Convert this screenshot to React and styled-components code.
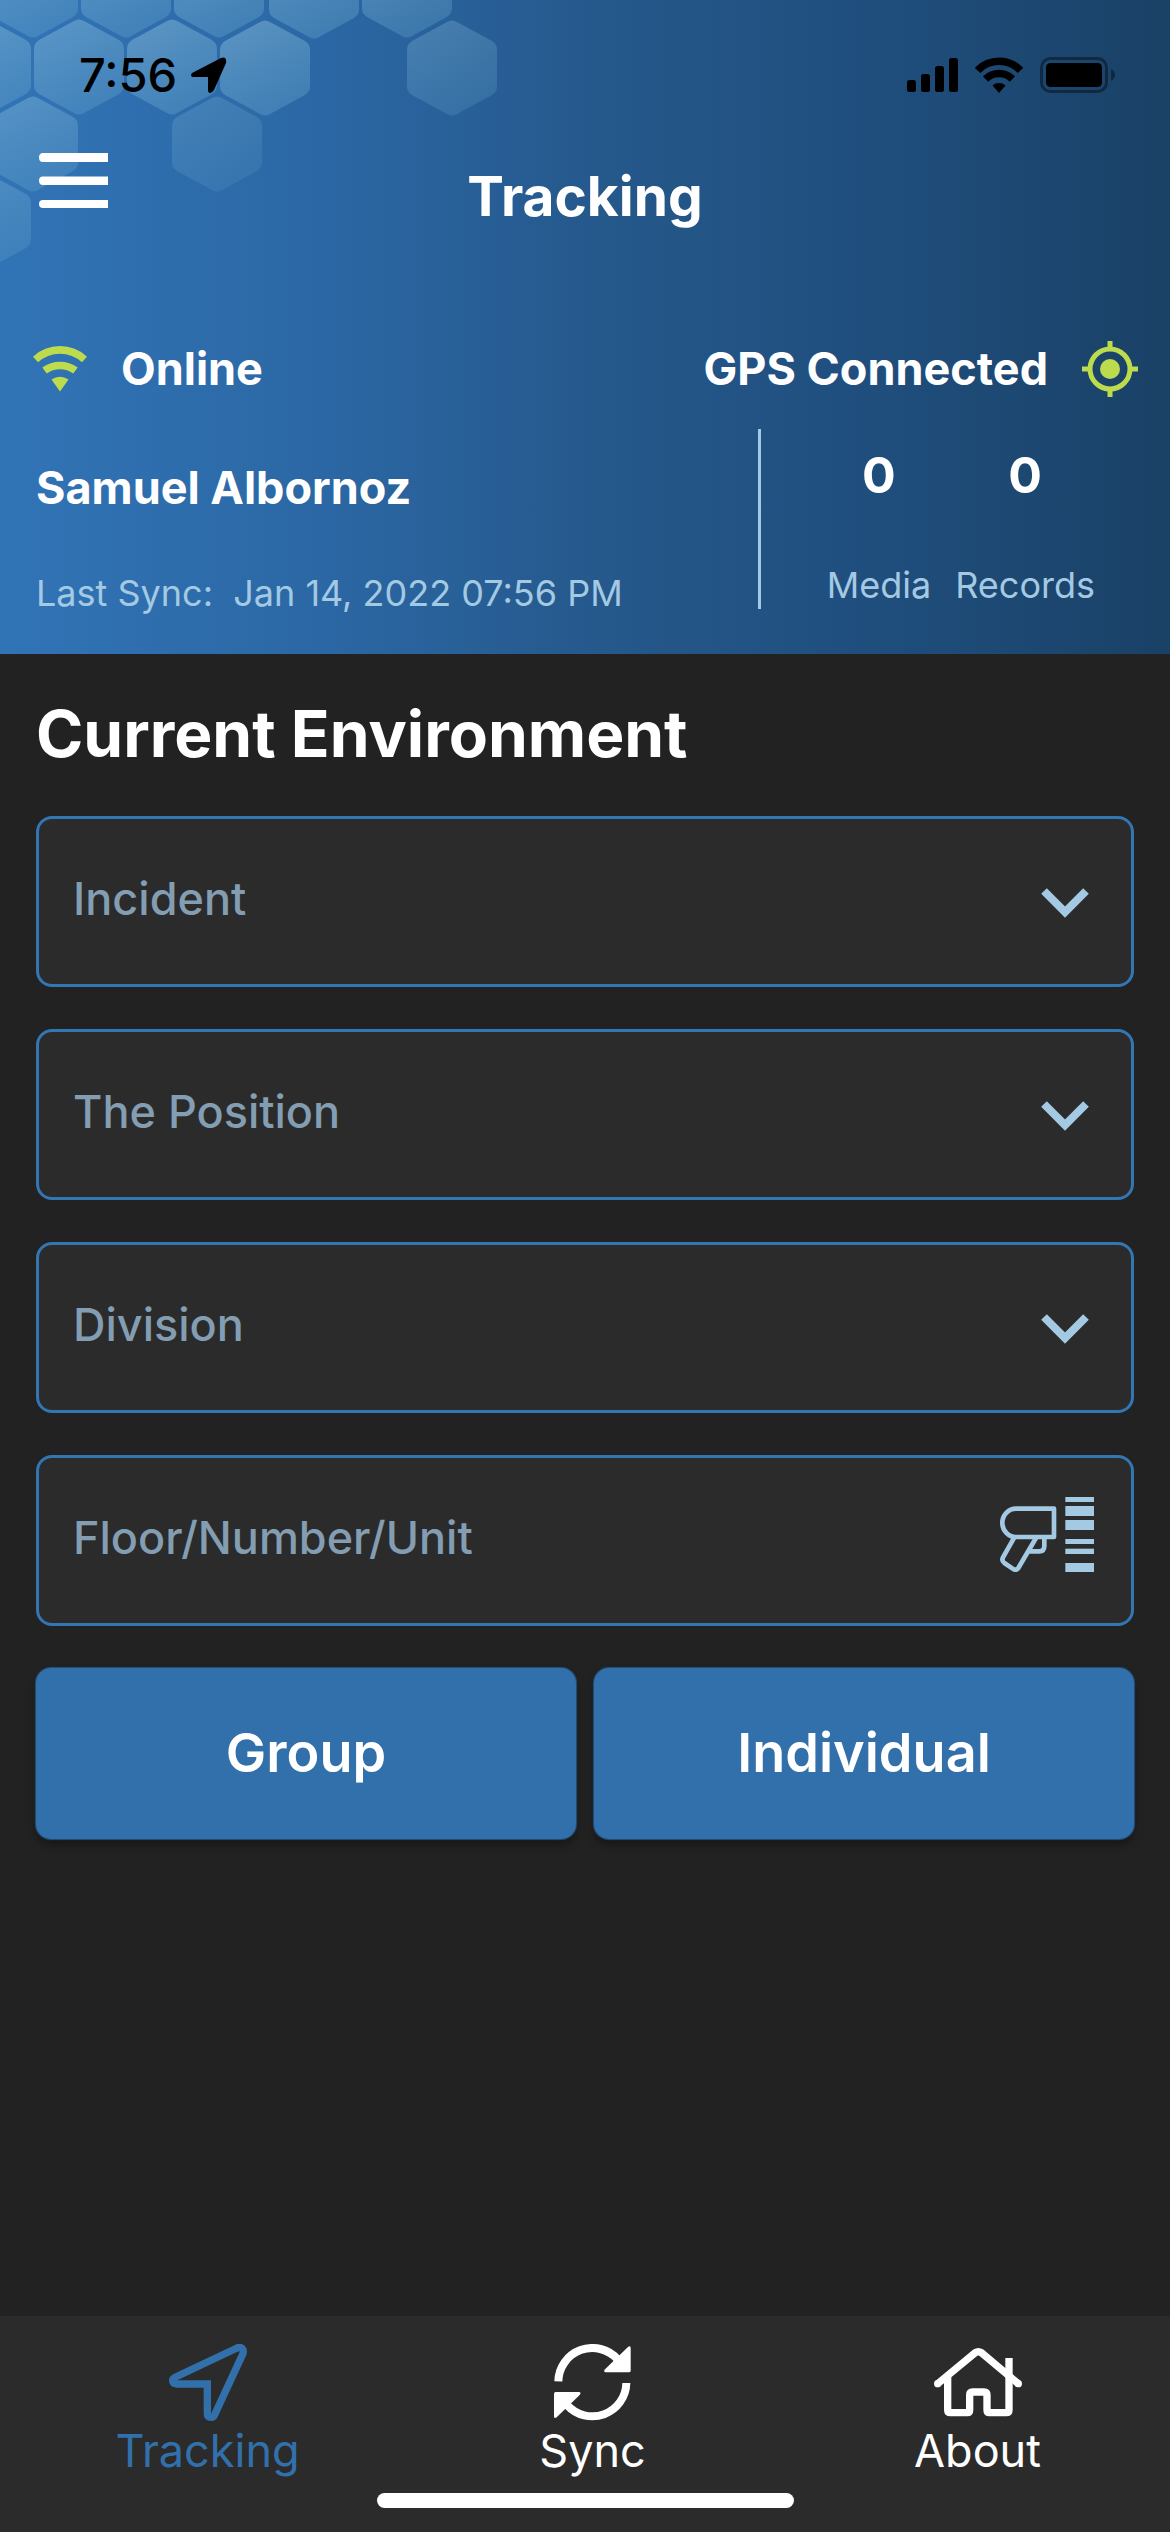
import React from "react";
import styled, { createGlobalStyle } from "styled-components";

const color = {
  page: "#222222",
  panel: "#2b2b2b",
  blue: "#3170aa",
  border: "#3276b3",
  sky: "#a4c9e2",
  muted: "#839db2",
  lime: "#bcdc4d",
  white: "#ffffff",
};

const GlobalStyle = createGlobalStyle`
  *, *::before, *::after { box-sizing: border-box; }
  body {
    margin: 0;
    background: ${color.page};
    color: ${color.white};
    font-family: Inter, "Liberation Sans", sans-serif;
  }
  button, select, input { font: inherit; color: inherit; }
  svg { display: block; flex: none; }
`;

const Screen = styled.div`
  min-height: 100vh;
  display: flex;
  flex-direction: column;
`;

const Header = styled.header`
  position: relative;
  overflow: hidden;
  padding-bottom: 39px;
  background: linear-gradient(90deg, #3174b6 0%, #2b67a4 28%, #25588b 52%, #1f4e7d 75%, #1a4166 100%);
`;

const Honeycomb = styled.svg`
  position: absolute;
  top: 0;
  left: 0;
`;

const StatusBar = styled.div`
  position: relative;
  display: flex;
  align-items: center;
  justify-content: space-between;
  height: 149px;
  padding: 0 55px 0 79px;
  color: #000;
`;

const StatusGroup = styled.div`
  display: flex;
  align-items: center;
  gap: ${(p) => p.$gap}px;
`;

const Clock = styled.span`
  font-size: 47px;
  line-height: 56px;
  font-weight: 500;
`;

const TitleBar = styled.div`
  position: relative;
  display: grid;
  grid-template-columns: 1fr auto 1fr;
  align-items: end;
  height: 77px;
  padding: 0 39px;
`;

const MenuButton = styled.button`
  align-self: start;
  justify-self: start;
  padding: 4px 0;
  border: 0;
  background: none;
`;

const Title = styled.h1`
  margin: 0;
  font-size: 55px;
  line-height: 60px;
  font-weight: 700;
`;

const ConnectionRow = styled.div`
  position: relative;
  display: flex;
  align-items: center;
  justify-content: space-between;
  margin-top: 115px;
  padding: 0 32px 0 33px;
`;

const Connection = styled.div`
  display: flex;
  align-items: center;
  gap: 34px;
  font-size: 45px;
  line-height: 54px;
  font-weight: 700;
`;

const Details = styled.div`
  position: relative;
  display: flex;
  align-items: flex-start;
  margin-top: 32px;
  padding: 0 75px 0 36px;
`;

const User = styled.div`
  flex: 1;
  display: flex;
  flex-direction: column;
  gap: 56px;
  padding-top: 32px;
`;

const UserName = styled.div`
  font-size: 45px;
  line-height: 54px;
  font-weight: 700;
`;

const Caption = styled.div`
  font-size: 36px;
  line-height: 44px;
  color: ${color.sky};
  white-space: pre;
`;

const Stats = styled.div`
  display: flex;
  gap: 24px;
  height: 180px;
  padding: 16px 0 0 66px;
  border-left: 3px solid ${color.sky};
`;

const Stat = styled.div`
  display: flex;
  flex-direction: column;
  align-items: center;
  gap: 58px;
`;

const Count = styled.div`
  font-size: 50px;
  line-height: 60px;
  font-weight: 700;
`;

const Main = styled.main`
  flex: 1;
  padding: 38px 36px;
`;

const Heading = styled.h2`
  margin: 0 0 40px;
  font-size: 64px;
  line-height: 84px;
  font-weight: 700;
`;

const Form = styled.form`
  display: flex;
  flex-direction: column;
  gap: 42px;
`;

const Field = styled.div`
  display: grid;
  align-items: center;
  height: 171px;
  border: 3px solid ${color.border};
  border-radius: 16px;
  background: ${color.panel};
  color: ${color.muted};
  font-size: 45px;
  font-weight: 500;

  > * { grid-area: 1 / 1; }
  > svg {
    justify-self: end;
    pointer-events: none;
  }
`;

const Select = styled.select`
  appearance: none;
  width: 100%;
  height: 100%;
  padding: 0 120px 6px 34px;
  border: 0;
  background: none;
  outline: none;
`;

const TextInput = styled.input`
  width: 100%;
  height: 100%;
  padding: 0 150px 6px 34px;
  border: 0;
  background: none;
  outline: none;
  &::placeholder { color: ${color.muted}; opacity: 1; }
`;

const Chevron = styled.svg`
  margin: 2px 42px 0 0;
`;

const Scanner = styled.svg`
  margin: 0 37px 12px 0;
`;

const Actions = styled.div`
  display: grid;
  grid-template-columns: 1fr 1fr;
  gap: 18px;
`;

const Action = styled.button`
  height: 171px;
  padding: 0 0 3px;
  border: 0;
  border-radius: 15px;
  background: ${color.blue};
  box-shadow: 0 0 1px 1px #23507c, 0 6px 9px rgba(0, 0, 0, 0.35);
  font-size: 54px;
  font-weight: 600;
`;

const Footer = styled.footer`
  display: flex;
  flex-direction: column;
  align-items: center;
  gap: 15px;
  padding: 28px 0 24px;
  background: ${color.panel};
`;

const Tabs = styled.nav`
  align-self: stretch;
  display: grid;
  grid-template-columns: repeat(3, 1fr);
  padding-left: 15px;
`;

const Tab = styled.a`
  display: flex;
  flex-direction: column;
  align-items: center;
  gap: 3px;
  color: ${(p) => (p.$active ? color.blue : color.white)};
  font-size: 45px;
  line-height: 54px;
  text-decoration: none;
`;

const HomeIndicator = styled.div`
  width: 417px;
  max-width: 60%;
  height: 15px;
  border-radius: 8px;
  background: ${color.white};
`;

const HEX = "M-5 -46 Q0 -49 5 -46 L40 -27 Q45 -24 45 -18 V18 Q45 24 40 27 L5 46 Q0 49 -5 46 L-40 27 Q-45 24 -45 18 V-18 Q-45 -24 -40 -27 Z";
const CELLS = [
  [33, -10, 0.95], [126, -10, 0.95], [219, -10, 1], [314, -9, 1], [407, -10, 0.9],
  [-14, 67, 1], [79, 67, 0.95], [172, 67, 1], [265, 68, 1], [452, 68, 0.65],
  [33, 144, 0.85], [217, 144, 0.5], [-14, 221, 0.7],
];

function HoneycombArt() {
  return (
    <Honeycomb width="520" height="290" viewBox="0 0 520 290" aria-hidden="true">
      <defs>
        <linearGradient id="cell" x1="0" y1="0" x2="0.4" y2="1">
          <stop offset="0" stopColor="#8fc0dd" stopOpacity="0.5" />
          <stop offset="1" stopColor="#6cacd0" stopOpacity="0.34" />
        </linearGradient>
      </defs>
      {CELLS.map(([x, y, o]) => (
        <path key={`${x},${y}`} d={HEX} transform={`translate(${x} ${y})`} fill="url(#cell)" opacity={o} />
      ))}
    </Honeycomb>
  );
}

const LocationGlyph = () => (
  <svg width="36" height="36" viewBox="0 0 36 36" aria-hidden="true">
    <path d="M3 15 L30 1 Q36 -1 35 6 L23 33 Q21 36 19 36 Q17 36 17 33 V20 H3 Q0 20 0 18 Q0 16 3 15 Z" />
  </svg>
);

const SignalGlyph = () => (
  <svg width="51" height="34" viewBox="0 0 51 34" aria-hidden="true">
    <rect x="0" y="22" width="9" height="12" rx="2.5" />
    <rect x="14" y="16" width="9" height="18" rx="2.5" />
    <rect x="28" y="8" width="9" height="26" rx="2.5" />
    <rect x="42" y="0" width="9" height="34" rx="2.5" />
  </svg>
);

const StatusWifiGlyph = () => (
  <svg width="48" height="36" viewBox="0 0 48 36" aria-hidden="true">
    <g fill="none" stroke="currentColor" strokeWidth="7.6">
      <path d="M2.5 13.4 A30 30 0 0 1 45.5 13.4" />
      <path d="M10.5 22 A19.3 19.3 0 0 1 37.5 22" />
    </g>
    <path d="M17.5 28.5 A10 10 0 0 1 30.5 28.5 L24 36 Z" />
  </svg>
);

const BatteryGlyph = () => (
  <svg width="75" height="36" viewBox="0 0 75 36" aria-hidden="true">
    <rect x="1.5" y="1.5" width="65" height="33" rx="9" fill="none" stroke="#000" strokeOpacity="0.4" strokeWidth="3" />
    <rect x="6" y="6" width="56" height="24" rx="4.5" />
    <path d="M71 12 Q75 14 75 18 Q75 22 71 24 Z" fillOpacity="0.4" />
  </svg>
);

const MenuGlyph = () => (
  <svg width="69" height="56" viewBox="0 0 69 56" fill="#fff" aria-hidden="true">
    <path d="M4 0 H69 V9 H4 Q0 9 0 4.500 Q0 0 4 0 Z M4 23.500 H69 V32 H4 Q0 32 0 27.500 Q0 23.500 4 23.500 Z M4 47 H69 V55 H4 Q0 55 0 51 Q0 47 4 47 Z" />
  </svg>
);

const OnlineGlyph = () => (
  <svg width="54" height="46" viewBox="0 0 54 46" aria-hidden="true">
    <g fill="none" stroke={color.lime} strokeWidth="7.6">
      <path d="M2.500 13.500 A36 36 0 0 1 51.500 13.500" />
      <path d="M11.500 24.500 A26.500 26.500 0 0 1 42.500 24.500" />
    </g>
    <path d="M18.500 33.500 A15 15 0 0 1 35.500 33.500 L27 45.500 Z" fill={color.lime} />
  </svg>
);

const TargetGlyph = () => (
  <svg width="56" height="56" viewBox="0 0 56 56" fill="none" stroke={color.lime} strokeWidth="5" aria-hidden="true">
    <circle cx="28" cy="28" r="20" />
    <circle cx="28" cy="28" r="10" fill={color.lime} stroke="none" />
    <path d="M28 0 V7 M28 49 V56 M0 28 H7 M49 28 H56" />
  </svg>
);

const ChevronGlyph = () => (
  <Chevron width="48" height="30" viewBox="0 0 48 30" aria-hidden="true">
    <path d="M3 3 L24 24 L45 3" fill="none" stroke={color.sky} strokeWidth="8" />
  </Chevron>
);

const ScannerGlyph = () => (
  <Scanner width="94" height="75" viewBox="120 171 282 225" aria-hidden="true">
    <g fill={color.sky}>
      <rect x="316" y="171" width="86" height="15" />
      <rect x="316" y="198" width="86" height="30" />
      <rect x="316" y="240" width="86" height="30" />
      <rect x="316" y="297" width="86" height="15" />
      <rect x="316" y="326" width="86" height="16" />
      <rect x="316" y="369" width="86" height="27" />
    </g>
    <g fill="none" stroke={color.sky} strokeWidth="14" strokeLinejoin="round">
      <path d="M168 206 H282 V291 H168 A41 42.500 0 0 1 168 206 Z" />
      <path d="M163 292 L129 352 Q124 362 133 369 L158 386 Q168 393 175 384 L228 294" />
      <path d="M253 294 V318 Q253 334 238 334 H208" />
    </g>
  </Scanner>
);

const TrackingGlyph = () => (
  <svg width="78" height="77" viewBox="204 132 234 231" aria-hidden="true">
    <path
      d="M224 231 L408 144 Q420 139 426 149 Q428 156 425 163 L340 346 Q337 352 331 352 Q319 352 319 342 V252 H228 Q215 252 215 241 Q215 235 224 231 Z"
      fill="none" stroke="currentColor" strokeWidth="22"
    />
  </svg>
);

const SyncGlyph = () => (
  <svg width="77" height="77" viewBox="223 134 231 231" fill="currentColor" aria-hidden="true">
    {[0, 180].map((angle) => (
      <g key={angle} transform={`rotate(${angle} 338 248.500)`}>
        <path d="M236 246 A102 102 0 0 1 414 180" fill="none" stroke="currentColor" strokeWidth="24" />
        <path d="M445 143 Q453 138 453 146 V214 Q453 219 448 219 H378 Q370 218 376 210 Z" />
      </g>
    ))}
  </svg>
);

const HomeGlyph = () => (
  <svg width="88" height="77" viewBox="216 133 264 231" fill="none" stroke="currentColor" strokeWidth="22" aria-hidden="true">
    <path d="M226 253 L340 159 Q349 153 358 159 L470 253" strokeLinejoin="round" />
    <g fill="currentColor" stroke="none">
      <circle cx="227" cy="252" r="11" />
      <circle cx="469" cy="252" r="11" />
    </g>
    <path d="M257 225 V331 Q257 339 265 339 H316 Q323 339 323 331 V286 Q323 277 332 277 H366 Q375 277 375 286 V331 Q375 339 382 339 H433 Q441 339 441 331 V175" />
  </svg>
);

const SELECTS = ["Incident", "The Position", "Division"];

const TABS = [
  { label: "Tracking", Glyph: TrackingGlyph, active: true },
  { label: "Sync", Glyph: SyncGlyph },
  { label: "About", Glyph: HomeGlyph },
];

export default function App() {
  return (
    <Screen>
      <GlobalStyle />
      <Header>
        <HoneycombArt />
        <StatusBar>
          <StatusGroup $gap={14}>
            <Clock>7:56</Clock>
            <LocationGlyph />
          </StatusGroup>
          <StatusGroup $gap={17}>
            <SignalGlyph />
            <StatusWifiGlyph />
            <BatteryGlyph />
          </StatusGroup>
        </StatusBar>
        <TitleBar>
          <MenuButton type="button" aria-label="Menu">
            <MenuGlyph />
          </MenuButton>
          <Title>Tracking</Title>
        </TitleBar>
        <ConnectionRow>
          <Connection>
            <OnlineGlyph />
            Online
          </Connection>
          <Connection>
            GPS Connected
            <TargetGlyph />
          </Connection>
        </ConnectionRow>
        <Details>
          <User>
            <UserName>Samuel Albornoz</UserName>
            <Caption>{"Last Sync:  Jan 14, 2022 07:56 PM"}</Caption>
          </User>
          <Stats>
            <Stat>
              <Count>0</Count>
              <Caption>Media</Caption>
            </Stat>
            <Stat>
              <Count>0</Count>
              <Caption>Records</Caption>
            </Stat>
          </Stats>
        </Details>
      </Header>

      <Main>
        <Heading>Current Environment</Heading>
        <Form onSubmit={(event) => event.preventDefault()}>
          {SELECTS.map((name) => (
            <Field key={name}>
              <Select aria-label={name} defaultValue="">
                <option value="">{name}</option>
              </Select>
              <ChevronGlyph />
            </Field>
          ))}
          <Field>
            <TextInput type="text" aria-label="Floor/Number/Unit" placeholder="Floor/Number/Unit" />
            <ScannerGlyph />
          </Field>
          <Actions>
            <Action type="button">Group</Action>
            <Action type="button">Individual</Action>
          </Actions>
        </Form>
      </Main>

      <Footer>
        <Tabs>
          {TABS.map(({ label, Glyph, active }) => (
            <Tab key={label} href={`#${label.toLowerCase()}`} $active={active}>
              <Glyph />
              {label}
            </Tab>
          ))}
        </Tabs>
        <HomeIndicator />
      </Footer>
    </Screen>
  );
}
